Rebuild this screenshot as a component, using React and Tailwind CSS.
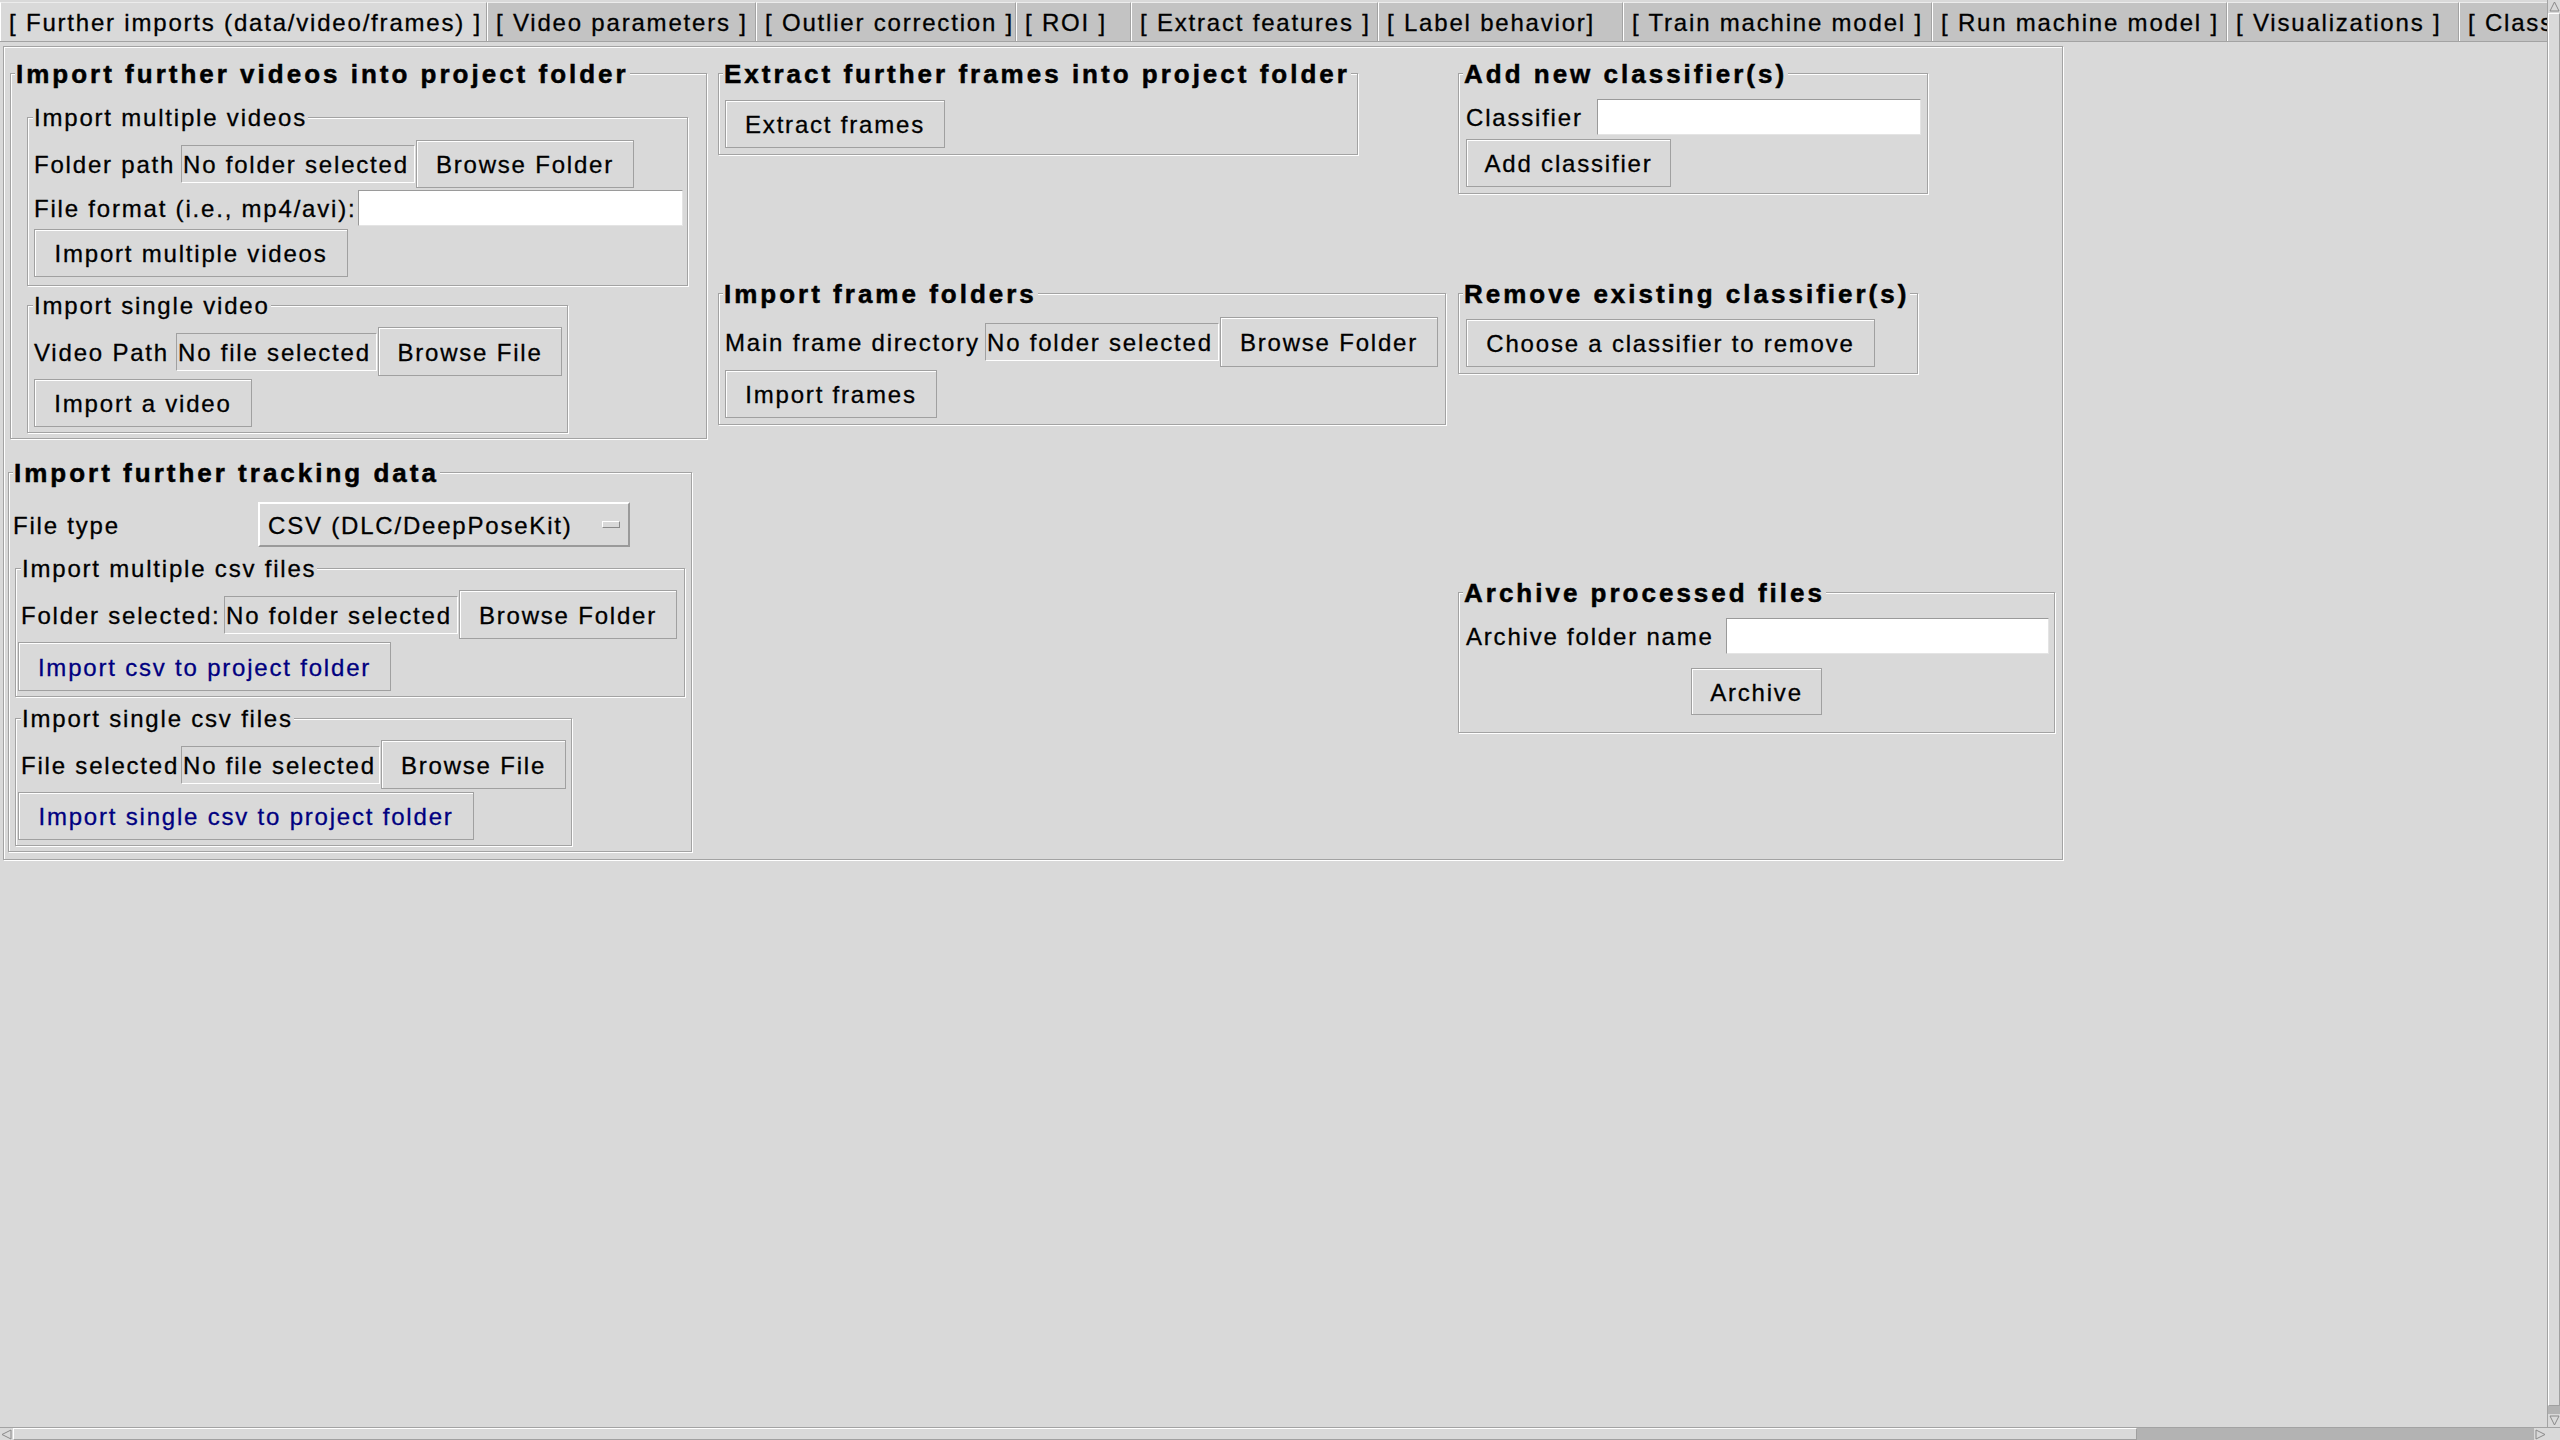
import React from 'react';

// Pestañas del cuaderno (ancho fijo de cada una)
const tabs = [
  { label: '[ Further imports (data/video/frames) ]', w: 'w-[487px]', active: true },
  { label: '[ Video parameters ]', w: 'w-[269px]' },
  { label: '[ Outlier correction ]', w: 'w-[260px]' },
  { label: '[ ROI ]', w: 'w-[115px]' },
  { label: '[ Extract features ]', w: 'w-[247px]' },
  { label: '[ Label behavior]', w: 'w-[245px]' },
  { label: '[ Train machine model ]', w: 'w-[309px]' },
  { label: '[ Run machine model ]', w: 'w-[295px]' },
  { label: '[ Visualizations ]', w: 'w-[232px]' },
  { label: '[ Classifier validation ]', w: 'w-[300px]' },
];

// Marco con título (como un LabelFrame de Tk)
const Group = ({ title, bold, className = '', children }) => (
  <fieldset
    className={`flex shrink-0 flex-col items-start border border-[#a3a3a3] shadow-[inset_1px_1px_0_#fff,1px_1px_0_#fff] ${className}`}>
    <legend
      className={
        bold
          ? 'ml-[4px] bg-[#d9d9d9] px-px pt-[2px] text-[26px] leading-[28px] font-bold tracking-[3px] [-webkit-text-stroke:0.5px_currentColor]'
          : 'ml-[5px] bg-[#d9d9d9] px-px pt-[2px] text-[24px] leading-[28px] tracking-[1.8px]'
      }>
      {title}
    </legend>
    {children}
  </fieldset>
);

const Btn = ({ children, className = '', navy = false }) => (
  <button
    type="button"
    className={`flex shrink-0 items-center justify-center border border-[#a0a0a0] bg-[#d9d9d9] pt-[2px] shadow-[inset_1px_1px_0_#fff] whitespace-nowrap ${
      navy ? 'text-[#000080]' : 'text-black'
    } ${className}`}>
    {children}
  </button>
);

// Etiqueta hundida que muestra la ruta elegida
const Sunken = ({ children, className = '' }) => (
  <div
    className={`flex h-[38px] shrink-0 items-center overflow-hidden whitespace-nowrap border border-[#a0a0a0] border-b-white border-r-white pl-px pt-[2px] ${className}`}>
    {children}
  </div>
);

const Entry = ({ className = '' }) => (
  <div className={`h-[36px] shrink-0 border border-[#9a9a9a] border-b-[#e4e4e4] border-r-[#e4e4e4] bg-white ${className}`}></div>
);

const Label = ({ children, className = '' }) => (
  <span className={`shrink-0 whitespace-nowrap pt-[2px] ${className}`}>{children}</span>
);

const ArrowUp = () => (
  <svg width="11" height="11" viewBox="0 0 11 11">
    <polygon points="5.5,1 10,10 1,10" fill="#d9d9d9" stroke="#8a8a8a" strokeWidth="1" />
  </svg>
);
const ArrowDown = () => (
  <svg width="11" height="11" viewBox="0 0 11 11">
    <polygon points="1,1 10,1 5.5,10" fill="#d9d9d9" stroke="#8a8a8a" strokeWidth="1" />
  </svg>
);
const ArrowLeft = () => (
  <svg width="11" height="11" viewBox="0 0 11 11">
    <polygon points="1,5.5 10,1 10,10" fill="#d9d9d9" stroke="#8a8a8a" strokeWidth="1" />
  </svg>
);
const ArrowRight = () => (
  <svg width="11" height="11" viewBox="0 0 11 11">
    <polygon points="1,1 10,5.5 1,10" fill="#d9d9d9" stroke="#8a8a8a" strokeWidth="1" />
  </svg>
);

export default function App() {
  return (
    <div className="flex h-[1440px] w-[2560px] flex-col overflow-hidden bg-[#d9d9d9] font-['Liberation_Sans',Arial,sans-serif] text-[24px] leading-[28px] tracking-[1.8px] text-black [-webkit-text-stroke:0.3px_currentColor]">
      <div className="flex h-[1427px]">
        <div className="flex min-w-0 flex-1 flex-col">
          {/* Barra de pestañas */}
          <div className="flex h-[42px] shrink-0 overflow-hidden border-b border-[#a3a3a3] pt-[2px]">
            {tabs.map(t => (
              <div
                key={t.label}
                className={`flex h-[39px] shrink-0 items-center overflow-hidden whitespace-nowrap border-l border-t border-l-white border-t-[#ececec] border-r border-r-[#a3a3a3] pl-[8px] pt-[1px] ${t.w} ${
                  t.active ? 'bg-[#d9d9d9]' : 'bg-[#c3c3c3]'
                }`}>
                {t.label}
              </div>
            ))}
          </div>

          {/* Panel de la pestaña activa */}
          <div className="flex-1 pl-[3px] pt-[4px]">
            <div className="flex h-[814px] w-[2060px] items-start border border-[#a3a3a3] shadow-[inset_1px_1px_0_#fff,1px_1px_0_#fff]">
              {/* Columna 1 */}
              <div className="ml-[6px] flex w-[697px] shrink-0 flex-col">
                <Group bold title="Import further videos into project folder" className="mt-[11px] h-[381px] w-[697px]">
                  <Group title="Import multiple videos" className="ml-[16px] mt-[14px] h-[184px] w-[661px]">
                    <div className="ml-[6px] mt-[8px] flex h-[48px] items-center">
                      <Label className="w-[147px]">Folder path</Label>
                      <Sunken className="w-[234px]">No folder selected</Sunken>
                      <Btn className="ml-[1px] h-[48px] w-[218px]">Browse Folder</Btn>
                    </div>
                    <div className="ml-[6px] flex h-[40px] items-center">
                      <Label className="w-[324px]">File format (i.e., mp4/avi):</Label>
                      <Entry className="w-[325px]" />
                    </div>
                    <Btn className="ml-[6px] mt-[1px] h-[48px] w-[314px]">Import multiple videos</Btn>
                  </Group>
                  <Group title="Import single video" className="ml-[16px] mt-[4px] h-[143px] w-[541px]">
                    <div className="ml-[6px] mt-[7px] flex h-[49px] items-center">
                      <Label className="w-[142px]">Video Path</Label>
                      <Sunken className="w-[201px]">No file selected</Sunken>
                      <Btn className="ml-[1px] h-[49px] w-[184px]">Browse File</Btn>
                    </div>
                    <Btn className="ml-[6px] mt-[3px] h-[48px] w-[218px]">Import a video</Btn>
                  </Group>
                </Group>

                <Group bold title="Import further tracking data" className="-ml-[2px] mt-[18px] h-[395px] w-[684px]">
                  <div className="ml-[4px] mt-[15px] flex h-[45px] items-center">
                    <Label className="w-[245px]">File type</Label>
                    <div className="flex h-[45px] w-[372px] shrink-0 items-center justify-between border-2 border-b-[#9a9a9a] border-l-white border-r-[#9a9a9a] border-t-white pl-[8px] pr-[8px]">
                      <span className="whitespace-nowrap pt-[2px]">CSV (DLC/DeepPoseKit)</span>
                      <span className="h-[7px] w-[18px] border border-b-[#8a8a8a] border-l-white border-r-[#8a8a8a] border-t-white bg-[#d9d9d9]"></span>
                    </div>
                  </div>
                  <Group title="Import multiple csv files" className="ml-[6px] mt-[6px] h-[144px] w-[670px]">
                    <div className="mt-[7px] flex h-[49px] items-center">
                      <Label className="ml-[5px] w-[203px]">Folder selected:</Label>
                      <Sunken className="w-[234px]">No folder selected</Sunken>
                      <Btn className="ml-[1px] h-[49px] w-[218px]">Browse Folder</Btn>
                    </div>
                    <Btn navy className="ml-[2px] mt-[3px] h-[49px] w-[373px]">
                      Import csv to project folder
                    </Btn>
                  </Group>
                  <Group title="Import single csv files" className="ml-[6px] mt-[6px] h-[143px] w-[557px]">
                    <div className="mt-[7px] flex h-[49px] items-center">
                      <Label className="ml-[5px] w-[160px]">File selected</Label>
                      <Sunken className="w-[199px]">No file selected</Sunken>
                      <Btn className="ml-[1px] h-[49px] w-[185px]">Browse File</Btn>
                    </div>
                    <Btn navy className="ml-[2px] mt-[3px] h-[48px] w-[456px]">
                      Import single csv to project folder
                    </Btn>
                  </Group>
                </Group>
              </div>

              {/* Columna 2 */}
              <div className="ml-[11px] flex shrink-0 flex-col">
                <Group bold title="Extract further frames into project folder" className="mt-[11px] h-[97px] w-[640px]">
                  <Btn className="ml-[6px] mt-[12px] h-[48px] w-[220px]">Extract frames</Btn>
                </Group>
                <Group bold title="Import frame folders" className="mt-[123px] h-[147px] w-[728px]">
                  <div className="ml-[6px] mt-[9px] flex h-[50px] items-center">
                    <Label className="w-[260px]">Main frame directory</Label>
                    <Sunken className="w-[234px]">No folder selected</Sunken>
                    <Btn className="ml-[1px] h-[50px] w-[218px]">Browse Folder</Btn>
                  </div>
                  <Btn className="ml-[6px] mt-[3px] h-[48px] w-[212px]">Import frames</Btn>
                </Group>
              </div>

              {/* Columna 3 */}
              <div className="ml-[12px] flex shrink-0 flex-col">
                <Group bold title="Add new classifier(s)" className="mt-[11px] h-[136px] w-[470px]">
                  <div className="ml-[7px] mt-[9px] flex h-[40px] items-center">
                    <Label className="w-[131px]">Classifier</Label>
                    <Entry className="w-[324px]" />
                  </div>
                  <Btn className="ml-[7px] mt-[2px] h-[48px] w-[205px]">Add classifier</Btn>
                </Group>
                <Group bold title="Remove existing classifier(s)" className="mt-[84px] h-[96px] w-[460px]">
                  <Btn className="ml-[7px] mt-[11px] h-[48px] w-[409px]">Choose a classifier to remove</Btn>
                </Group>
                <Group bold title="Archive processed files" className="mt-[203px] h-[156px] w-[597px]">
                  <div className="ml-[7px] mt-[9px] flex h-[40px] items-center">
                    <Label className="w-[260px]">Archive folder name</Label>
                    <Entry className="w-[323px]" />
                  </div>
                  <Btn className="mt-[12px] h-[47px] w-[131px] self-center">Archive</Btn>
                </Group>
              </div>
            </div>
          </div>
        </div>

        {/* Barra de desplazamiento vertical */}
        <div className="flex w-[13px] shrink-0 flex-col border-l border-[#a3a3a3] bg-[#b3b3b3]">
          <div className="flex h-[13px] items-center justify-center bg-[#d9d9d9]">
            <ArrowUp />
          </div>
          <div className="flex-1 border border-[#a0a0a0] border-l-white border-t-white bg-[#d9d9d9]"></div>
          <div className="h-[8px]"></div>
          <div className="flex h-[13px] items-center justify-center bg-[#d9d9d9]">
            <ArrowDown />
          </div>
        </div>
      </div>

      {/* Barra de desplazamiento horizontal */}
      <div className="flex h-[13px] shrink-0 border-t border-[#a3a3a3] bg-[#b3b3b3]">
        <div className="flex w-[13px] items-center justify-center bg-[#d9d9d9]">
          <ArrowLeft />
        </div>
        <div className="w-[2124px] border border-[#a0a0a0] border-l-white border-t-white bg-[#d9d9d9]"></div>
        <div className="flex-1"></div>
        <div className="flex w-[13px] items-center justify-center bg-[#d9d9d9]">
          <ArrowRight />
        </div>
        <div className="w-[13px] bg-[#d9d9d9]"></div>
      </div>
    </div>
  );
}
